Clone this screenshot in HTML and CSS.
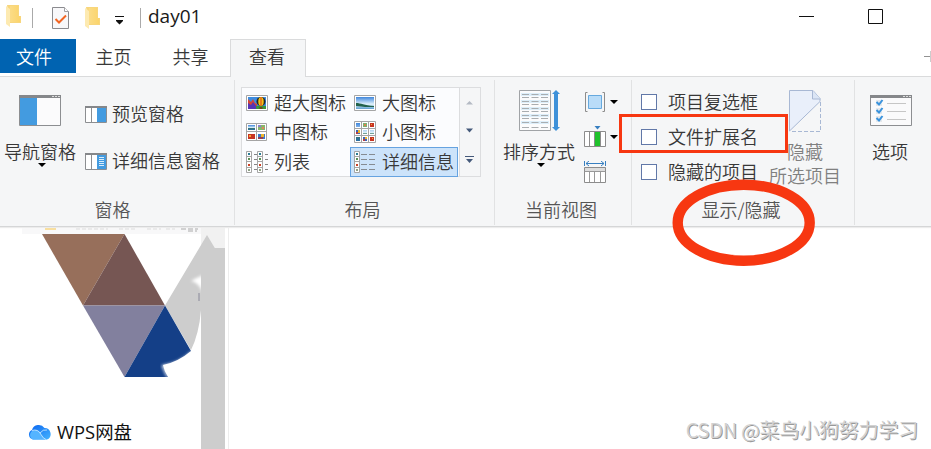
FILE: index.html
```html
<!DOCTYPE html>
<html lang="zh-CN">

<head>
    <meta charset="UTF-8">
    <meta name="viewport" content="width=device-width, initial-scale=1.0">
    <title>day01</title>
    <link rel="stylesheet" href="styles.css">
</head>

<body>
    <!-- shared shapes -->
    <svg class="defs" width="0" height="0">
        <defs>
            <linearGradient id="gold" x1="0" x2="1"><stop offset="0" stop-color="#fbdc87"/><stop offset="1" stop-color="#fbd46b"/></linearGradient>
            <linearGradient id="sky" x1="0" y1="0" x2="0" y2="1"><stop offset="0" stop-color="#3f86dc"/><stop offset=".55" stop-color="#e2f3fb"/><stop offset=".6" stop-color="#3d7965"/><stop offset="1" stop-color="#2a6fa8"/></linearGradient>
            <linearGradient id="lake" x1="0" y1="0" x2="0" y2="1"><stop offset="0" stop-color="#3f86dc"/><stop offset=".6" stop-color="#e2f3fb"/><stop offset="1" stop-color="#5d9fd0"/></linearGradient>
            <linearGradient id="cloud" x1="0" y1="0" x2="1" y2="1"><stop offset="0" stop-color="#0a64f0"/><stop offset="1" stop-color="#45b4ff"/></linearGradient>
            <filter id="soft"><feGaussianBlur stdDeviation="1.6"/></filter>
            <symbol id="folder" viewBox="0 0 15 23">
                <path d="M1 0h12v11h2v7H4z" fill="#f8d67c"/>
                <path d="M4 1h8v10h2v6H4z" fill="url(#gold)"/>
                <path d="M0 1l4 3v18l-4-3z" fill="#fdeab1"/>
            </symbol>
            <symbol id="details" viewBox="0 0 11 22">
                <path d="M.5.5h5v21h-5zM.5 5.500h5M.5 10.500h5M.5 16.500h5" fill="#fff" stroke="#a5a5a5"/>
                <path d="M2 2h2v2H2z" fill="#2b7c94"/><path d="M2 7h2v2H2z" fill="#5b8f55"/>
                <path d="M2 13h2v2H2z" fill="#cc4125"/><path d="M2 18h2v2H2z" fill="#8fa384"/>
                <path d="M8 3.500h3M8 8.500h3M8 13.500h3M8 18.500h3" stroke="#858585"/>
            </symbol>
        </defs>
    </svg>

    <div class="titlebar">
        <svg class="folder" width="15" height="23"><use href="#folder"/></svg>
        <span class="sep sep-first"></span>
        <svg class="check-doc" width="18" height="23" viewBox="0 0 18 23">
            <path d="M.5.5h12l4 4v17H.5z" fill="#f8f8fa" stroke="#8b8b8f"/>
            <path d="M12.500.5v4h4" fill="#fff" stroke="#a0a0a4"/>
            <path d="M3.500 12l3.500 3.500L14 8.500" fill="none" stroke="#f26522" stroke-width="2"/>
        </svg>
        <svg class="folder folder-second" width="15" height="23"><use href="#folder"/></svg>
        <svg class="customize" width="9" height="9" viewBox="0 0 9 9"><path d="M0 0h9v1H0zM1 4h7v1L4.500 8.500 1 5z" fill="#111"/></svg>
        <span class="sep"></span>
        <span class="title">day01</span>
        <svg class="win-buttons" width="86" height="17" viewBox="0 0 86 17">
            <path d="M0 8.500h15" stroke="#111"/>
            <path d="M69.500 1.500h14v14h-14z" fill="none" stroke="#111"/>
        </svg>
    </div>

    <div class="tabs">
        <div class="tab file">文件</div>
        <div class="tab">主页</div>
        <div class="tab">共享</div>
        <div class="tab active">查看</div>
        <svg class="collapse" width="7" height="12" viewBox="0 0 7 12"><path d="M0 5.500h7" stroke="#929292"/><path d="M6.500 0v11" stroke="#ccc"/></svg>
    </div>

    <div class="ribbon">
        <div class="group panes">
            <div class="content">
                <div class="big nav">
                    <svg width="42" height="31" viewBox="0 0 42 31">
                        <path d="M.5.5h41v30H.5z" fill="#fbfbfc" stroke="#8c8e91"/>
                        <path d="M0 0h42v3H0z" fill="#85878a"/>
                        <path d="M33 1h2v1h-2zM36 1h2v1h-2zM39 1h2v1h-2z" fill="#ddd"/>
                        <path d="M1 3h17v27H1z" fill="#439be0"/>
                    </svg>
                    <span>导航窗格</span>
                    <i class="arrow"></i>
                </div>
                <div class="pane-list">
                    <div class="item">
                        <svg width="22" height="17" viewBox="0 0 22 17">
                            <path d="M.5.5h21v16H.5zM6.500 1v15" fill="#fff" stroke="#8c8e91"/>
                            <path d="M0 0h22v2H0z" fill="#85878a"/>
                            <path d="M12 2h9v14h-9z" fill="#439be0"/>
                        </svg>
                        <span>预览窗格</span>
                    </div>
                    <div class="item">
                        <svg width="22" height="17" viewBox="0 0 22 17">
                            <path d="M.5.5h21v16H.5zM6.500 1v15" fill="#fff" stroke="#8c8e91"/>
                            <path d="M0 0h22v2H0z" fill="#85878a"/>
                            <path d="M12 2h9v14h-9z" fill="#439be0"/>
                            <path d="M14 4.500h5M14 6.500h5M14 8.500h5M14 10.500h5M14 12.500h5" stroke="#d9ecfa"/>
                        </svg>
                        <span>详细信息窗格</span>
                    </div>
                </div>
            </div>
            <div class="label">窗格</div>
        </div>

        <div class="group layout">
            <div class="gallery">
                <div class="views">
                    <div class="view">
                        <svg width="22" height="16" viewBox="0 0 22 16">
                            <path d="M.5.500h21v15H.5z" fill="#fff" stroke="#a5a5a5"/>
                            <path d="M2 2h18v12H2z" fill="#3d8de0"/>
                            <path d="M2 4l3 3 2-3 2 4 2 1v4H2z" fill="#d84536"/>
                            <path d="M2 8l3 2 2-3 4 5v2H2z" fill="#5535b5"/>
                            <path d="M10 11h10v3H10z" fill="#39963a"/>
                            <ellipse cx="15" cy="6.500" rx="4.500" ry="4.500" fill="#252525"/>
                            <ellipse cx="15" cy="6.500" rx="2.700" ry="4.500" fill="#f4c316"/>
                            <path d="M14.500 2h1v9h-1z" fill="#d33c20"/>
                            <path d="M13.500 12h3v2h-3z" fill="#704518"/>
                        </svg>
                        <span>超大图标</span>
                    </div>
                    <div class="view">
                        <svg width="22" height="16" viewBox="0 0 22 16">
                            <path d="M.5.500h21v15H.5z" fill="#fff" stroke="#a5a5a5"/>
                            <path d="M2 2h18v12H2z" fill="url(#lake)"/>
                            <path d="M2 8c5 0 8 2.500 18 3v1c-8 0-10 0-18-1z" fill="#23634b"/>
                        </svg>
                        <span>大图标</span>
                    </div>
                    <div class="view">
                        <svg width="22" height="18" viewBox="0 0 22 18">
                            <path d="M.5.500h20v17H.5zM10.500.5v17M.5 8.500h20" fill="#fff" stroke="#a5a5a5"/>
                            <path d="M2 2h7v5H2z" fill="url(#sky)"/>
                            <path d="M12 2h7v5h-7z" fill="#86b66c"/><path d="M12 2h3v2h-3z" fill="#8d82cd"/><path d="M16 4h2v2h-2z" fill="#e38260"/>
                            <path d="M2 11h7v5H2z" fill="#c73422"/><path d="M3 12h2v2H3z" fill="#f5a131"/>
                            <path d="M12 11h7v5h-7z" fill="#3b78cb"/><path d="M15 11h3v3h-3z" fill="#edb52b"/><path d="M12 14h5v2h-5z" fill="#953d52"/>
                        </svg>
                        <span>中图标</span>
                    </div>
                    <div class="view">
                        <svg width="22" height="22" viewBox="0 0 22 22">
                            <path d="M.5.500h21v21H.5zM7.500.5v21M14.500.5v21M.5 7.500h21M.5 14.500h21" fill="#fff" stroke="#a5a5a5"/>
                            <path d="M2 2h4v4H2zM16 9h4v4h-4zM2 16h4v4H2zM9 9h4v4H9z" fill="url(#sky)"/>
                            <path d="M9 2h4v4H9z" fill="#7ab172"/><path d="M10 3h2v2h-2z" fill="#d9844d"/>
                            <path d="M16 2h4v4h-4zM16 16h4v4h-4z" fill="#c73422"/><path d="M17 3h1v1h-1zM18 17h1v1h-1z" fill="#f5a131"/>
                            <path d="M2 9h4v4H2zM9 16h4v4H9z" fill="#3b65bb"/><path d="M4 9h2v3H4zM11 16h2v2h-2z" fill="#edb52b"/><path d="M2 11h2v2H2zM9 18h2v2H9z" fill="#b53c42"/>
                        </svg>
                        <span>小图标</span>
                    </div>
                    <div class="view">
                        <svg width="22" height="22" viewBox="0 0 22 22">
                            <use href="#details" width="11" height="22"/>
                            <use href="#details" x="11" width="11" height="22"/>
                        </svg>
                        <span>列表</span>
                    </div>
                    <div class="view selected">
                        <svg width="22" height="22" viewBox="0 0 22 22">
                            <use href="#details" width="11" height="22"/>
                            <path d="M7 3.500h6M15 3.500h6M7 8.500h6M15 8.500h6M7 13.500h6M15 13.500h6M7 18.500h6M15 18.500h6" stroke="#858b92"/>
                        </svg>
                        <span>详细信息</span>
                    </div>
                </div>
                <div class="scroll">
                    <svg width="9" height="5" viewBox="0 0 9 5"><path d="M1 4.500L4.500 1 8 4.500z" fill="#b4bac4"/></svg>
                    <svg width="9" height="5" viewBox="0 0 9 5"><path d="M1 .5h7L4.500 4.500z" fill="#44597a"/></svg>
                    <svg width="9" height="8" viewBox="0 0 9 8"><path d="M0 0h9v1H0zM1 3h7L4.500 7z" fill="#44597a"/></svg>
                </div>
            </div>
            <div class="label">布局</div>
        </div>

        <div class="group current">
            <div class="content">
                <div class="big sort">
                    <svg width="42" height="42" viewBox="0 0 42 42">
                        <path d="M.5.500h31v40H.5z" fill="#fbfbfc" stroke="#a0a3a6"/>
                        <path d="M2 3h28v3H2zM2 10h28v3H2zM2 17h28v3H2zM2 24h28v3H2zM2 31h28v3H2z" fill="#dceefa"/>
                        <path d="M3 4.500h27M3 7.500h27M3 11.500h27M3 14.500h27M3 18.500h27M3 21.500h27M3 25.500h27M3 28.500h27M3 32.500h27M3 37.500h27" stroke="#a9adb0" stroke-dasharray="7 2.500"/>
                        <path d="M37 0l4 4h-2v33h2l-4 4-4-4h2V4h-2z" fill="#3e91d9"/>
                    </svg>
                    <span>排序方式</span>
                    <i class="arrow"></i>
                </div>
                <div class="tools">
                    <div class="tool">
                        <svg width="22" height="20" viewBox="0 0 22 20">
                            <path d="M3.500.500h-2v19h2M18.500.500h2v19h-2" fill="none" stroke="#8c8c8c"/>
                            <path d="M4.500 3.500h13v13h-13z" fill="#b9dcf8" stroke="#66a9de"/>
                        </svg>
                        <i class="arrow"></i>
                    </div>
                    <div class="tool">
                        <svg width="22" height="22" viewBox="0 0 22 22">
                            <path d="M.5 5.500h21v15H.5zM5.500 6v14M10.500 6v14M16.500 6v14" fill="#fff" stroke="#8c8c8c"/>
                            <path d="M11 6h5v14h-5z" fill="#20c22c"/>
                            <path d="M10.500 0h6l-3 3.500z" fill="#377fc0"/>
                        </svg>
                        <i class="arrow"></i>
                    </div>
                    <div class="tool">
                        <svg width="22" height="23" viewBox="0 0 22 23">
                            <path d="M.5 0v5M21.500 0v5M2 2.500h18M5 0L2 2.500 5 5M17 0l3 2.500L17 5" fill="none" stroke="#377fc0"/>
                            <path d="M.5 6.500h21v15H.5z" fill="#fff" stroke="#8c8c8c"/>
                            <path d="M1 7h20v3H1z" fill="#ddd"/>
                            <path d="M.5 10.500h21M5.500 11v10M10.500 11v10M16.500 11v10" stroke="#999"/>
                        </svg>
                    </div>
                </div>
            </div>
            <div class="label">当前视图</div>
        </div>

        <div class="group show">
            <div class="content">
                <div class="checks">
                    <div class="check"><span class="box"></span><span>项目复选框</span></div>
                    <div class="check"><span class="box"></span><span>文件扩展名</span></div>
                    <div class="check"><span class="box"></span><span>隐藏的项目</span></div>
                </div>
                <div class="big hide">
                    <svg width="32" height="42" viewBox="0 0 32 42">
                        <path d="M.5 41V.5H24l7 8v3z" fill="#e9effa" stroke="#a8b8d4"/>
                        <path d="M23.500.5v8.500h8" fill="#dbe5f5" stroke="#a8b8d4"/>
                        <path d="M31.500 12v29.500H1" fill="none" stroke="#a8b8d4" stroke-dasharray="4 2"/>
                    </svg>
                    <span>隐藏</span>
                    <span>所选项目</span>
                </div>
            </div>
            <div class="label">显示/隐藏</div>
        </div>

        <div class="group options">
            <div class="big">
                <svg width="42" height="31" viewBox="0 0 42 31">
                    <path d="M.5.500h41v30H.5z" fill="#fafafb" stroke="#8c8e91"/>
                    <path d="M0 0h42v3H0z" fill="#85878a"/>
                    <path d="M33 1h2v1h-2zM36 1h2v1h-2zM39 1h2v1h-2z" fill="#ddd"/>
                    <path d="M6 5h6v6H6zM6 13h6v6H6zM6 21h6v6H6z" fill="#e4e8ec"/>
                    <path d="M6.500 7L9 9.500 12.500 5M6.500 15L9 17.500 12.500 13M6.500 23L9 25.500 12.500 21" fill="none" stroke="#3a93dd" stroke-width="2"/>
                    <path d="M17 8.500h19M17 16.500h19M17 24.500h19" stroke="#c6c6c6"/>
                </svg>
                <span>选项</span>
            </div>
        </div>
    </div>

    <div class="explorer">
        <div class="sidebar">
            <div class="tree">
                <svg class="art" width="225" height="150" viewBox="0 0 225 150">
                    <path d="M22 0h203v6H22z" fill="#f8f8f9"/>
                    <path d="M201 0h24v24h-24z" fill="#f1f1f1"/>
                    <path d="M45 0h11v2H45z" fill="#f8dfa0"/>
                    <path d="M76 1h32M119 1h18M147 1h14M166 1h9" stroke="#ddd" stroke-dasharray="4 2"/>
                    <path d="M181 1h17M188 3h9" stroke="#aaa" stroke-dasharray="5 2"/>
                    <path d="M42 6h82.500L83 77.500z" fill="#976f5b"/>
                    <path d="M124.500 6L165 77.500H83z" fill="#765653"/>
                    <path d="M83 77.500h82L124.500 149z" fill="#82809e"/>
                    <path d="M165 77.500L207 7l18 30v45h-24q-2 24-10 40z" fill="#cdcdcd"/>
                    <path d="M203 47q-9 4-12 6 9 2 12 13z" fill="#fff" filter="url(#soft)"/>
                    <path d="M199 65v8" stroke="#889"/>
                    <path d="M165 77.500L191 123q-13 11-28 14 1 6 5 12h-43.500z" fill="#143f87"/>
                    <path d="M192 124q-13 12-29 14 2 6 5 11" fill="none" stroke="#fff" stroke-width="2" filter="url(#soft)"/>
                </svg>
                <div class="wps">
                    <svg width="23" height="16" viewBox="0 0 23 16">
                        <path d="M5 15.500a5 5 0 0 1-1-9.500A7 7 0 0 1 16.500 4 6 6 0 0 1 19 15.500z" fill="url(#cloud)"/>
                        <path d="M4 7q6-3 9 3 2 5 6 5.500H5a5 5 0 0 1-1-8.500z" fill="#55b4ff"/>
                        <path d="M4 6.500q6-2 9 4 2 4 5 5M12 9q3-4 7-3" fill="none" stroke="#d4edff" stroke-width=".8"/>
                    </svg>
                    <span>WPS网盘</span>
                </div>
            </div>
            <div class="scrollbar"></div>
        </div>
        <div class="files">
            <span class="watermark">CSDN @菜鸟小狗努力学习</span>
        </div>
    </div>

    <!-- red marks over the ribbon -->
    <div class="mark mark-box"></div>
    <svg class="mark mark-ring" width="144" height="88" viewBox="0 0 144 88"><ellipse cx="71.700" cy="43.700" rx="66" ry="38" fill="none" stroke="#f73711" stroke-width="10.400"/></svg>
</body>

</html>
```
FILE: styles.css
```css
* {
    box-sizing: border-box;
}

body {
    margin: 0;
    width: 931px;
    height: 449px;
    overflow: hidden;
    position: relative;
    background: #fff;
    color: #383838;
    font: 350 18px/24px "Noto Sans CJK SC", sans-serif;
    white-space: nowrap;
}

svg {
    display: block;
    flex-shrink: 0;
}

.defs {
    position: absolute;
}

.titlebar {
    display: flex;
    align-items: flex-start;
    height: 39px;
    padding: 5px 46px 0 6px;
}

.sep {
    width: 1px;
    height: 20px;
    margin: 3px 7px 0 16px;
    background: #aaa;
}

.sep-first {
    margin: 3px 19px 0 11px;
}

.check-doc {
    margin-top: 2px;
}

.folder-second {
    margin: 2px 0 0 15px;
}

.customize {
    margin: 11px 0 0 15px;
}

.title {
    margin-top: -1px;
    color: #1a1a1a;
    font: 19px/24px "Open Sans", sans-serif;
}

.win-buttons {
    margin: 3px 0 0 auto;
}

.tabs {
    display: flex;
    height: 37px;
}

.tab {
    width: 77px;
    padding-right: 2px;
    line-height: 34px;
    text-align: center;
}

.file {
    width: 76px;
    height: 34px;
    padding-right: 8px;
    background: #0063b1;
    color: #fff;
}

.active {
    width: 76px;
    height: 38px;
    border: 1px solid #dadbdc;
    border-bottom: 0;
    background: #f5f6f7;
    line-height: 32px;
    z-index: 1;
}

.collapse {
    margin: 12px 0 0 auto;
}

.ribbon {
    display: grid;
    grid-template-columns: 235px 260px 137px 223px 76px;
    height: 151px;
    border-top: 1px solid #dadbdc;
    border-bottom: 1px solid #d5d6d7;
    background: #f5f6f7;
    box-shadow: 0 1px 1px #ececec;
}

.group {
    display: flex;
    flex-direction: column;
    justify-content: space-between;
    height: 145px;
    margin-top: 3px;
    border-right: 1px solid #e1e2e3;
}

.content {
    display: flex;
}

.label {
    padding: 0 4px 4px 0;
    color: #555;
    text-align: center;
}

.panes .label {
    padding-right: 9px;
}

.big {
    display: flex;
    flex-direction: column;
    align-items: center;
    padding-top: 15px;
}

.big span {
    margin-top: 13px;
}

.arrow {
    border: 4px solid transparent;
    border-top-color: #000;
    border-bottom: 0;
}

.big .arrow {
    margin-left: 4px;
}

.nav {
    width: 80px;
}

.nav svg {
    margin-right: 1px;
}

.pane-list {
    display: flex;
    flex-direction: column;
    gap: 23px;
    padding: 22px 0 0 5px;
}

.item,
.view,
.check,
.tool {
    display: flex;
    align-items: center;
}

.item {
    gap: 5px;
    height: 24px;
}

/* lift the text a pixel against its icon */
.item span,
.view span,
.check span + span {
    padding-bottom: 2px;
}

.gallery {
    display: flex;
    width: 240px;
    height: 90px;
    margin: 7px 0 0 6px;
    border: 1px solid #dcdddf;
    background: #fbfcfe;
}

.views {
    display: grid;
    grid-template-columns: 108px 108px;
    grid-template-rows: 29px 30px 30px;
    width: 217px;
}

.view {
    gap: 6px;
    padding-left: 4px;
}

.selected {
    padding-left: 3px;
    border: 1px solid #66a3e0;
    background: #cce3fa;
}

.scroll {
    display: grid;
    flex: 1;
    place-items: center;
    padding-right: 2px;
    border-left: 1px solid #dcdddf;
    background: #f5f6f7;
}

.sort {
    width: 85px;
    padding: 10px 0 0 3px;
}

.sort svg {
    margin-left: 1px;
}

.sort span,
.hide span {
    margin-top: 7px;
}

.tools {
    display: grid;
    grid-template-rows: repeat(3, 35px);
    padding: 4px 0 0 4px;
}

.tool {
    gap: 4px;
}

.tool:last-child {
    padding-top: 1px;
}

.checks {
    display: grid;
    grid-template-rows: repeat(3, 35px);
    width: 129px;
    padding: 4px 0 0 9px;
}

.check {
    gap: 11px;
}

.box {
    width: 16px;
    height: 16px;
    border: 1px solid #6178a8;
    background: #fff;
}

.hide {
    width: 88px;
    padding-top: 10px;
    color: #808080;
}

.hide span + span {
    margin-top: 0;
}

.options {
    border: 0;
    align-items: center;
    padding-right: 4px;
}

.options span {
    margin-right: 2px;
}

.explorer {
    display: flex;
    height: 222px;
    padding-top: 1px;
}

.sidebar {
    display: flex;
    width: 229px;
    border-right: 1px solid #ededed;
}

.tree {
    width: 201px;
}

.art {
    overflow: visible;
}

.wps {
    display: flex;
    align-items: center;
    gap: 6px;
    padding: 42px 0 0 28px;
    color: #111;
    font: 18.400px/24px "Open Sans", "Noto Sans CJK SC", sans-serif;
}

.scrollbar {
    width: 24px;
    margin-top: 20px;
    background: #cdcdcd;
    z-index: 1;
}

.files {
    display: flex;
    flex: 1;
    align-items: flex-end;
    justify-content: flex-end;
    padding: 0 13px 7px 0;
}

.watermark {
    color: #d2d2d2;
    font-size: 20px;
    letter-spacing: -.2px;
    text-shadow: 1px 1px 0 #999;
}

.mark {
    position: absolute;
}

.mark-box {
    left: 619px;
    top: 114px;
    width: 169px;
    height: 39px;
    border: 3px solid #f73711;
}

.mark-ring {
    left: 672px;
    top: 179px;
}
```
